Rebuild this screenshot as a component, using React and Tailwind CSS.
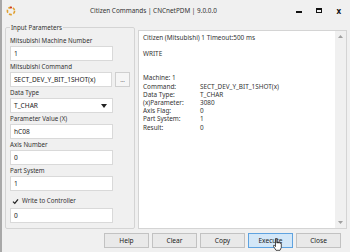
import React from "react";

const Label = ({ children }) => (
  <div className="h-[11px] leading-[11px] text-[6.2px] text-[#333]">{children}</div>
);
const Input = ({ value, w = "w-[103px]" }) => (
  <div className={`${w} h-[15px] bg-white border border-[#d9d9d9] flex items-center pl-[3px] text-[6.6px] text-[#222]`}>{value}</div>
);

export default function App() {
  const rows = [
    ["Command:", "SECT_DEV_Y_BIT_1SHOT(x)"],
    ["Data Type:", "T_CHAR"],
    ["(x)Parameter:", "3080"],
    ["Axis Flag:", "0"],
    ["Part System:", "1"],
    ["Result:", "0"],
  ];
  return (
    <div className="relative w-[350px] h-[252px] bg-[#f0f0f0] border-l-2 border-[#a8a8a8] flex flex-col overflow-hidden" style={{ fontFamily: '"Noto Sans", "Liberation Sans", sans-serif' }}>
      <div className="h-[21px] flex items-center relative shrink-0">
        <svg width="10" height="10" viewBox="0 0 10 10" className="ml-[4px]">
          <circle cx="5" cy="5" r="3.6" fill="none" stroke="#e0a030" strokeWidth="1.6" strokeDasharray="3 1.6" />
          <circle cx="5" cy="1.6" r="1" fill="#d03020" />
        </svg>
        <div className="flex-1 ml-[74px] text-[6.4px] text-[#333]">Citizen Commands | CNCnetPDM | 9.0.0.0</div>
        <div className="flex items-center gap-[14px] mr-[9px]">
          <div className="w-[6px] h-[2px] bg-[#111] mt-[2px]" />
          <div className="w-[6px] h-[5px] border-[1.5px] border-[#111] border-t-[2px]" />
          <div className="text-[8px] font-bold text-[#111] leading-none">x</div>
        </div>
      </div>
      <div className="flex pl-[3px] pr-[3px] gap-[3px] flex-1 min-h-0">
        <fieldset className="w-[130px] border border-[#d4d4d4] rounded-[2px] px-[4px] pb-0 mt-[2px] h-[206px] min-w-0">
          <legend className="text-[6.2px] text-[#333] px-[1px] leading-[9px]">Input Parameters</legend>
          <div className="mt-[3px]">
            <Label>Mitsubishi Machine Number</Label>
            <Input value="1" />
            <Label>Mitsubishi Command</Label>
            <div className="flex items-center gap-[3px]">
              <Input value="SECT_DEV_Y_BIT_1SHOT(x)" />
              <div className="w-[15px] h-[15px] bg-[#f5f5f5] border border-[#cfcfcf] text-[6px] text-[#444] flex items-center justify-center leading-none">...</div>
            </div>
            <Label>Data Type</Label>
            <div className="w-[103px] h-[15px] bg-white border border-[#d9d9d9] flex items-center pl-[3px] pr-[5px] text-[6.6px] text-[#222] justify-between">
              <span>T_CHAR</span>
              <svg width="6" height="4" viewBox="0 0 6 4"><path d="M0 0 L6 0 L3 4 Z" fill="#222" /></svg>
            </div>
            <Label>Parameter Value (X)</Label>
            <Input value="hC08" />
            <Label>Axis Number</Label>
            <Input value="0" />
            <Label>Part System</Label>
            <Input value="1" />
            <div className="flex items-center mt-[4px] mb-[1px] h-[12px] gap-[3px] pl-[2px]">
              <svg width="7" height="7" viewBox="0 0 7 7"><path d="M1 3.6 L2.8 5.4 L6 1.4" fill="none" stroke="#222" strokeWidth="1.3" /></svg>
              <span className="text-[6.2px] text-[#333]">Write to Controller</span>
            </div>
            <Input value="0" />
          </div>
        </fieldset>
        <div className="flex-1 h-[199px] mt-[9px] bg-white border border-[#d4d4d4] flex min-w-0">
          <div className="flex-1 px-[4px] pt-[3px] text-[6.4px] text-[#333] leading-[8.2px]">
            <div>Citizen (Mitsubishi) 1 Timeout:500 ms</div>
            <div className="mt-[8px]">WRITE</div>
            <div className="mt-[16px]">Machine: 1</div>
            {rows.map(([a, b]) => (
              <div key={a} className="flex">
                <span className="w-[57px] shrink-0">{a}</span>
                <span>{b}</span>
              </div>
            ))}
          </div>
          <div className="w-[11px] bg-[#f0f0f0] flex flex-col justify-between items-center py-[4px]">
            <svg width="5" height="3" viewBox="0 0 5 3"><path d="M0 3 L2.5 0 L5 3 Z" fill="#a0a0a0" /></svg>
            <svg width="5" height="3" viewBox="0 0 5 3"><path d="M0 0 L2.5 3 L5 0 Z" fill="#a0a0a0" /></svg>
          </div>
        </div>
      </div>
      <div className="flex justify-end gap-[3px] pr-[9px] pb-[4px] pt-[2px] shrink-0">
        {["Help", "Clear", "Copy", "Execute", "Close"].map((b) => (
          <div key={b} className={`w-[45px] h-[15px] border flex items-center justify-center text-[6.6px] text-[#222] ${b === "Execute" ? "bg-[#d3e7f8] border-[#5fa3e0]" : "bg-[#e9e9e9] border-[#c2c2c2]"}`}>{b}</div>
        ))}
      </div>
      <svg className="absolute left-[271px] top-[238px]" width="9" height="13" viewBox="0 0 9 13">
        <path d="M2.5 0.5 L3.8 0.5 L3.8 5 L4.5 5 L4.5 4 L5.5 4 L5.5 5 L6.3 5 L6.3 4.6 L7.3 4.6 L7.3 5.4 L8.3 5.4 L8.3 9.5 L7 12.3 L3 12.3 L0.6 8.6 L0.6 7.4 L1.6 7.4 L2.5 8.6 Z" fill="#fff" stroke="#222" strokeWidth="0.8" strokeLinejoin="round" />
      </svg>
    </div>
  );
}
